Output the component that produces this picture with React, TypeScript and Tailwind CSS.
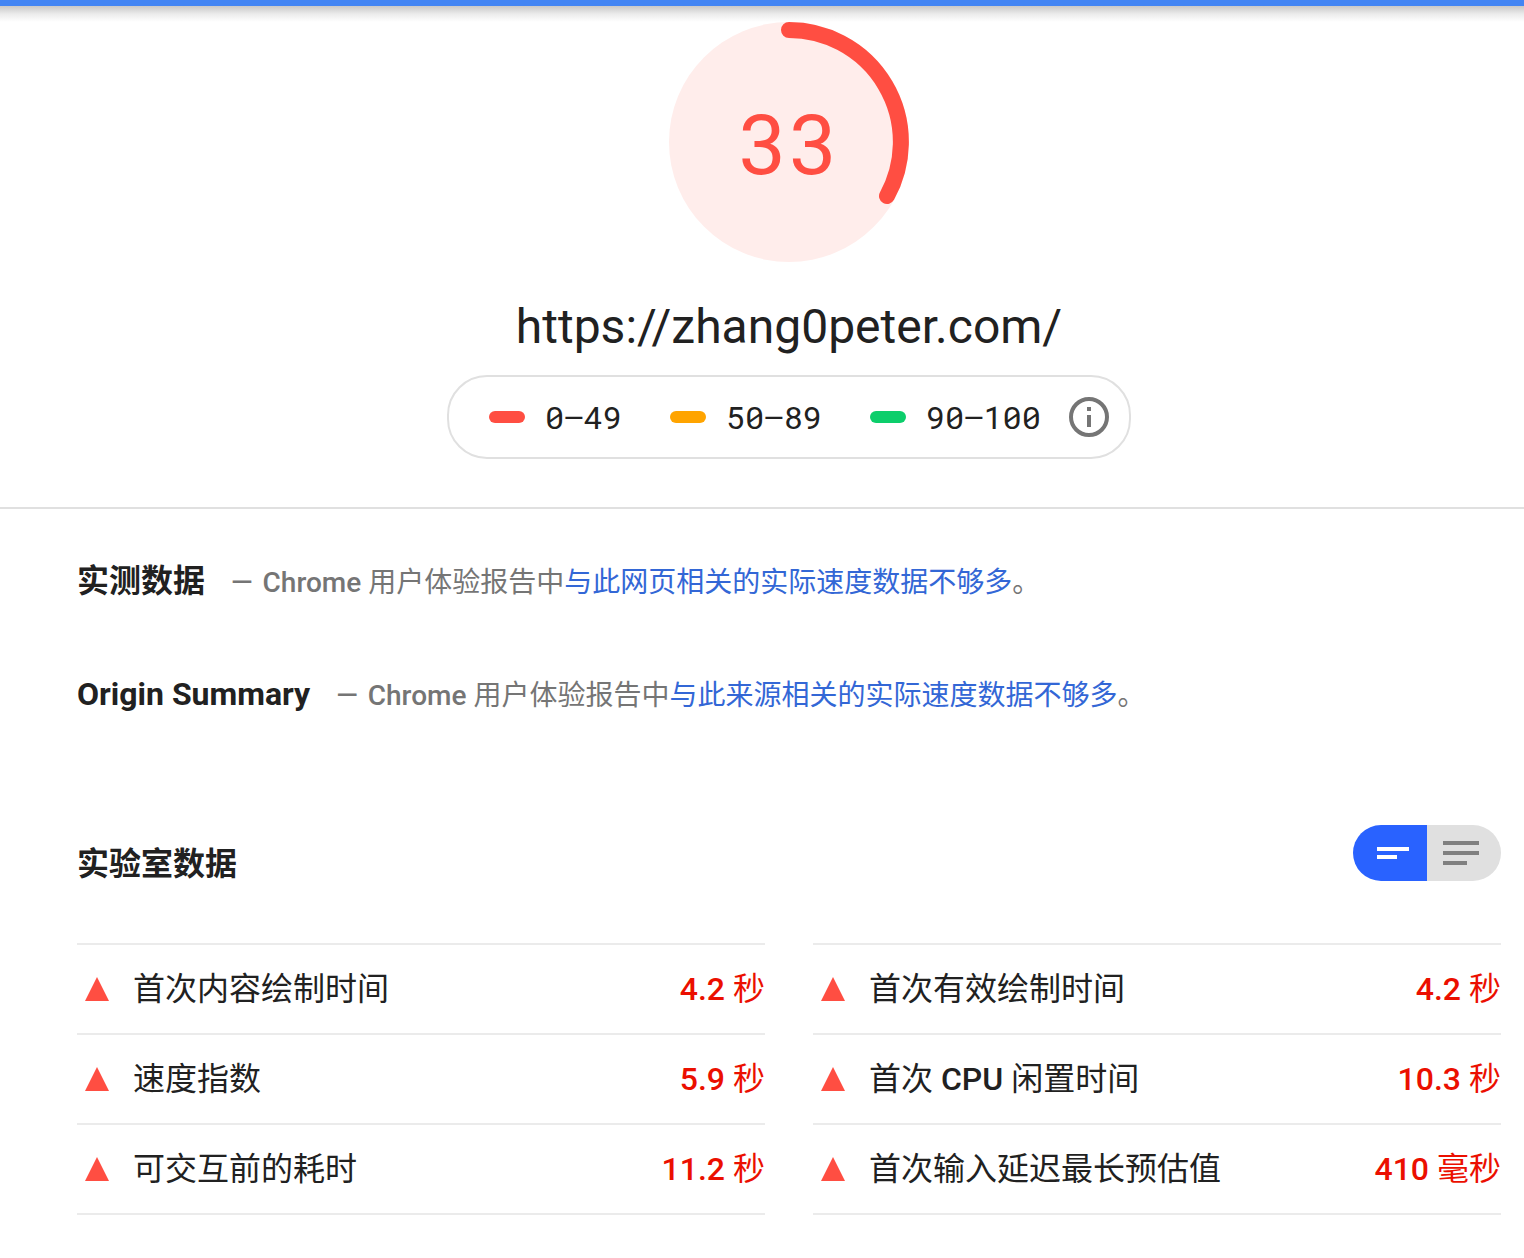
import React from "react";

function Gauge() {
  return (
    <svg className="h-60 w-60" viewBox="0 0 240 240" aria-hidden="true">
      <circle cx="120" cy="120" r="120" fill="#ffedeb" />
      <path d="M120 8A112 112 0 0 1 218 174" fill="none" stroke="#ff4e42" strokeWidth="16" strokeLinecap="round" />
    </svg>
  );
}

function Range({ color, label }: { color: string; label: string }) {
  return (
    <span className="flex items-center gap-5">
      <span className={`h-3 w-9 rounded-full ${color}`} />
      <span>{label}</span>
    </span>
  );
}

function FieldRow({ title, link }: { title: string; link: string }) {
  return (
    <section className="flex items-baseline whitespace-nowrap">
      <h2 className="text-[32px] leading-12 font-bold text-[#212121]">{title}</h2>
      <p className="ml-[26px] text-[28px] leading-12 text-[#757575]">
        <span className="mr-2.5 font-medium">—</span>
        <span className="font-medium">Chrome </span>用户体验报告中
        <a href="#" className="text-[#3367d6]">{link}</a>。
      </p>
    </section>
  );
}

type Item = { name: React.ReactNode; value: string; unit: string };

function Metrics({ items }: { items: Item[] }) {
  return (
    <ul className="flex-1 border-t-2 border-[#ebebeb]">
      {items.map((m, i) => (
        <li key={i} className="flex h-[90px] items-center border-b-2 border-[#ebebeb] text-[32px] leading-12">
          <svg className="ml-2 h-6 w-6" viewBox="0 0 24 24" aria-hidden="true">
            <path d="M12 0L24 24H0Z" fill="#ff4e42" />
          </svg>
          <span className="ml-6 flex-1 text-[#212121]">{m.name}</span>
          <span className="text-[#eb0f00]"><span className="font-medium">{m.value}</span> {m.unit}</span>
        </li>
      ))}
    </ul>
  );
}

const left: Item[] = [
  { name: "首次内容绘制时间", value: "4.2", unit: "秒" },
  { name: "速度指数", value: "5.9", unit: "秒" },
  { name: "可交互前的耗时", value: "11.2", unit: "秒" },
];
const right: Item[] = [
  { name: "首次有效绘制时间", value: "4.2", unit: "秒" },
  { name: <>首次 <span className="font-medium">CPU</span> 闲置时间</>, value: "10.3", unit: "秒" },
  { name: "首次输入延迟最长预估值", value: "410", unit: "毫秒" },
];

export default function App() {
  return (
    <div className="min-h-screen bg-white font-[Roboto,'Noto_Sans_CJK_SC',sans-serif]">
      <div className="h-1.5 bg-[#4285f4]" />
      <div className="h-4 bg-linear-to-b from-[#c8c8c8] via-[#ebebeb] to-white" />
      <header className="flex flex-col items-center border-b-2 border-[#e0e0e0] pb-12 pl-[54px]">
        <div className="grid place-items-center">
          <div className="col-start-1 row-start-1"><Gauge /></div>
          <span className="col-start-1 row-start-1 font-['Roboto_Mono','DejaVu_Sans_Mono',monospace] text-[84px] leading-none text-[#ff4e42]">33</span>
        </div>
        <h1 className="mt-[33px] text-[48px] leading-16 text-[#212121]">https://zhang0peter.com/</h1>
        <div className="mt-4 flex h-[84px] items-center rounded-[40px] border-2 border-[#e0e0e0] pr-5 pl-10 font-['Roboto_Mono','DejaVu_Sans_Mono',monospace] text-[32px] text-[#212121]">
          <div className="flex gap-12">
            <Range color="bg-[#ff4e42]" label="0–49" />
            <Range color="bg-[#ffa400]" label="50–89" />
            <Range color="bg-[#0cce6b]" label="90–100" />
          </div>
          <button aria-label="Info" className="ml-7">
            <svg className="h-10 w-10" viewBox="0 0 40 40"><circle cx="20" cy="20" r="18" fill="none" stroke="#757575" strokeWidth="4" /><path d="M18 10h4v4h-4zM18 18h4v12h-4z" fill="#757575" /></svg>
          </button>
        </div>
      </header>
      <main className="pt-12 pr-[23px] pl-[77px]">
        <FieldRow title="实测数据" link="与此网页相关的实际速度数据不够多" />
        <div className="mt-[63px]"><FieldRow title="Origin Summary" link="与此来源相关的实际速度数据不够多" /></div>
        <div className="mt-[105px] flex items-start justify-between">
          <h2 className="pt-[15px] text-[32px] leading-12 font-bold text-[#212121]">实验室数据</h2>
          <div className="flex overflow-hidden rounded-full">
            <button aria-label="Compact" className="h-14 w-[74px] bg-[#2962ff]"><svg className="h-14 w-[74px]" viewBox="0 0 74 56"><path d="M24 22h32v4H24zM24 30h20v4H24z" fill="#fff" /></svg></button>
            <button aria-label="Detailed" className="h-14 w-[74px] bg-[#e0e0e0]"><svg className="h-14 w-[74px]" viewBox="0 0 74 56"><path d="M16 16h36v4H16zM16 26h36v4H16zM16 36h24v4H16z" fill="#808080" /></svg></button>
          </div>
        </div>
        <div className="mt-[55px] flex gap-12"><Metrics items={left} /><Metrics items={right} /></div>
      </main>
    </div>
  );
}
